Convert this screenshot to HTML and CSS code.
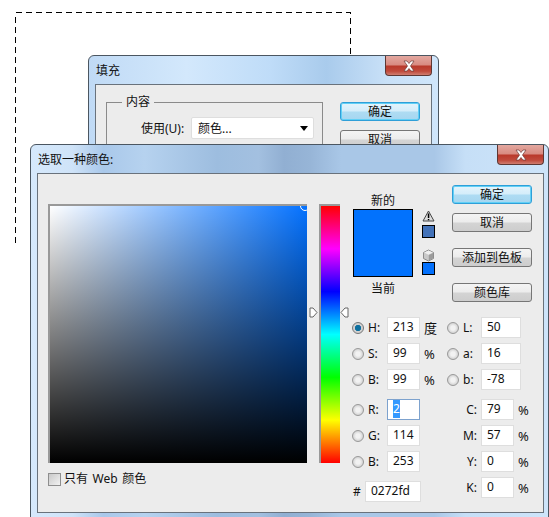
FILE: index.html
```html
<!doctype html>
<html>
<head>
	<title>拾色器</title>
	<link rel="stylesheet" href="styles.css">
</head>
<body>
<div class="desk">
	<svg class="selection" width="337" height="232">
		<rect x="0.5" y="0.5" width="335" height="240" fill="none" stroke="#000" stroke-dasharray="6 4" shape-rendering="crispEdges" />
	</svg>

	<div class="dialog fill-dialog">
		<div class="titlebar">
			<span>填充</span>
			<div class="close">
				<svg width="16" height="12" viewBox="0 0 16 12"><path d="M3 1h3l2 2.500 2-2.500h3l-3.500 5 3.500 5h-3l-2-2.500-2 2.500h-3l3.500-5z" fill="#fff" stroke="#6b3a36" stroke-width="0.7" /></svg>
			</div>
		</div>
		<div class="panel fill-panel">
			<fieldset class="group">
				<legend>内容</legend>
				<div class="use-row">
					<label>使用(U):</label>
					<div class="select"><span>颜色...</span><i class="select-arrow"></i></div>
				</div>
			</fieldset>
			<div class="buttons fill-buttons">
				<button class="default">确定</button>
				<button>取消</button>
			</div>
		</div>
	</div>

	<div class="dialog color-dialog">
		<div class="titlebar">
			<span>选取一种颜色:</span>
			<div class="close">
				<svg width="16" height="12" viewBox="0 0 16 12"><path d="M3 1h3l2 2.500 2-2.500h3l-3.500 5 3.500 5h-3l-2-2.500-2 2.500h-3l3.500-5z" fill="#fff" stroke="#6b3a36" stroke-width="0.7" /></svg>
			</div>
		</div>
		<div class="panel color-panel">
			<div class="picker">
				<div class="field"><i class="field-ring"></i></div>
				<div class="web-only"><i class="checkbox"></i><span>只有 Web 颜色</span></div>
			</div>

			<div class="hue">
				<svg class="hue-mark hue-mark-left" width="9" height="11" viewBox="0 0 9 11"><path d="M1 1h3l4 4.500-4 4.500h-3z" fill="#fff" stroke="#666" /></svg>
				<svg class="hue-mark hue-mark-right" width="9" height="11" viewBox="0 0 9 11"><path d="M8 1h-3l-4 4.500 4 4.500h3z" fill="#fff" stroke="#666" /></svg>
			</div>

			<div class="side">
				<div class="side-top">
					<div class="swatch-col">
						<div class="swatch-label">新的</div>
						<div class="swatch"></div>
						<div class="swatch-label">当前</div>
					</div>
					<div class="gamut-col">
						<svg width="13" height="12" viewBox="0 0 13 12"><path d="M6.500 1l5.500 10h-11z" fill="#dcdcdc" stroke="#444" /><path d="M5.800 3.500h1.500v4.500h-1.500zM5.800 9h1.500v1.300h-1.500z" fill="#000" /></svg>
						<div class="mini-swatch mini-warn"></div>
						<svg class="cube" width="13" height="13" viewBox="0 0 13 13"><path d="M6.500 1l5 2.500v6l-5 2.500-5-2.500v-6z" fill="#c9c9c9" stroke="#8c8c8c" /><path d="M2 3.500l4.500 2.200 4.500-2.200-4.500-2z" fill="#efefef" /><path d="M6.800 6v5.500l4.300-2.200v-5.400z" fill="#9c9c9c" /></svg>
						<div class="mini-swatch mini-web"></div>
					</div>
					<div class="buttons color-buttons">
						<button class="default">确定</button>
						<button>取消</button>
						<button class="spaced">添加到色板</button>
						<button class="spaced">颜色库</button>
					</div>
				</div>

				<div class="values">
					<div class="value-col value-col-left">
						<div class="row"><i class="radio on"></i><label>H:</label><div class="num">213</div><span class="unit">度</span></div>
						<div class="row"><i class="radio"></i><label>S:</label><div class="num">99</div><span class="unit">%</span></div>
						<div class="row"><i class="radio"></i><label>B:</label><div class="num">99</div><span class="unit">%</span></div>
						<div class="row row-gap"><i class="radio"></i><label>R:</label><div class="num focus"><span class="picked">2</span></div></div>
						<div class="row"><i class="radio"></i><label>G:</label><div class="num">114</div></div>
						<div class="row"><i class="radio"></i><label>B:</label><div class="num">253</div></div>
						<div class="row row-gap"><label class="hash">#</label><div class="num hex">0272fd</div></div>
					</div>
					<div class="value-col">
						<div class="row"><i class="radio"></i><label class="lab">L:</label><div class="num wide">50</div></div>
						<div class="row"><i class="radio"></i><label class="lab">a:</label><div class="num wide">16</div></div>
						<div class="row"><i class="radio"></i><label class="lab">b:</label><div class="num wide">-78</div></div>
						<div class="row row-gap"><label class="cmyk">C:</label><div class="num">79</div><span class="unit">%</span></div>
						<div class="row"><label class="cmyk">M:</label><div class="num">57</div><span class="unit">%</span></div>
						<div class="row"><label class="cmyk">Y:</label><div class="num">0</div><span class="unit">%</span></div>
						<div class="row"><label class="cmyk">K:</label><div class="num">0</div><span class="unit">%</span></div>
					</div>
				</div>
			</div>
		</div>
	</div>
</div>
</body>
</html>
```

FILE: styles.css
```css
* {
    margin: 0;
    padding: 0;
    box-sizing: border-box;
}

body {
    background: #fff;
    font: 12px "Noto Sans", "Noto Sans CJK SC", sans-serif;
    color: #111;
}

.desk {
    position: relative;
    width: 549px;
    height: 517px;
    overflow: hidden;
}

.selection {
    position: absolute;
    left: 15px;
    top: 12px;
}

/* windows */
.dialog {
    position: absolute;
    border: 1px solid #4b5661;
    border-radius: 6px 6px 0 0;
    padding: 0 6px;
}

.fill-dialog {
    left: 88px;
    top: 55px;
    width: 351px;
    height: 120px;
    background: linear-gradient(90deg, #c0daf5 0, #d3e8fc 28%, #bfdcf8 52%, #a9cbec 68%, #c8e0f7 85%, #d0e6fb 100%);
}

.color-dialog {
    left: 30px;
    top: 144px;
    width: 519px;
    height: 380px;
    padding-right: 4px;
    background: linear-gradient(90deg, #d6e9fc 0, #cfe3f8 8%, #a9c8ea 14%, #b6d2ef 22%, #9dbddf 36%, #a3c0e0 44%, #91afd2 49%, #97b5d7 54%, #a9c7e7 60%, #a9c7e7 78%, #c6dff7 84%, #cde4fa 100%);
}

.titlebar {
    display: flex;
    justify-content: space-between;
    height: 28px;
    padding: 7px 0 0 1px;
    line-height: 15px;
}

.close {
    display: flex;
    align-items: center;
    justify-content: center;
    width: 47px;
    height: 20px;
    margin-top: -7px;
    border: 1px solid #5e3733;
    border-top: 0;
    border-radius: 0 0 4px 4px;
    background: linear-gradient(#e3a8a0, #d88a80 48%, #b9382a 52%, #c04a3c 80%, #cf7d70);
}

.panel {
    display: flex;
    background: #ececec;
    border: 1px solid #69727c;
}

.fill-panel {
    height: 100px;
}

.color-panel {
    height: 340px;
}

/* buttons */
.buttons {
    display: flex;
    flex-direction: column;
}

.buttons button {
    width: 80px;
    height: 19px;
    padding-top: 1px;
    border: 1px solid #767676;
    border-radius: 3px;
    background: linear-gradient(#f4f4f4, #ececec 48%, #d4d4d4 52%, #cdcdcd);
    font: 12px/16px "Noto Sans", "Noto Sans CJK SC", sans-serif;
    color: #111;
}

.buttons button.default {
    border: 1px solid #2f9fd8;
    box-shadow: inset 0 0 0 1px #61d0f6;
    background: linear-gradient(#e4f4fc, #d4edfa 48%, #aedcf3 52%, #a6d6f0);
}

.fill-buttons {
    gap: 9px;
    margin: 17px 0 0 17px;
}

.color-buttons {
    gap: 9px;
    margin-top: 11px;
}

.color-buttons button.spaced {
    margin-top: 7px;
}

/* fill dialog contents */
.group {
    width: 217px;
    height: 90px;
    margin: 10px 0 0 10px;
    border: 1px solid #8a8a8a;
}

.group legend {
    margin-left: 15px;
    padding: 0 4px;
    font-size: 12px;
    line-height: 14px;
}

.use-row {
    display: flex;
    align-items: center;
    margin: 8px 0 0 34px;
}

.use-row label {
    width: 50px;
}

.select {
    display: flex;
    align-items: center;
    justify-content: space-between;
    width: 123px;
    height: 22px;
    padding: 0 5px 0 6px;
    background: #fff;
    border: 1px solid #dedede;
    border-radius: 2px;
}

.select-arrow {
    border: 4px solid transparent;
    border-top: 5px solid #000;
    border-bottom: 0;
}

/* colour picker */
.picker {
    margin: 30px 0 0 10px;
}

.field {
    position: relative;
    width: 259px;
    height: 259px;
    overflow: hidden;
    border-top: 2px solid #999;
    border-left: 2px solid #999;
    background:
        linear-gradient(transparent, #000),
        linear-gradient(90deg, #fff, #0472ff);
}

.field-ring {
    position: absolute;
    right: -3px;
    top: -5px;
    width: 10px;
    height: 10px;
    border: 1px solid #fff;
    border-radius: 50%;
}

.web-only {
    display: flex;
    align-items: center;
    gap: 3px;
    margin-top: 8px;
    line-height: 16px;
    word-spacing: 1.5px;
}

.checkbox {
    width: 13px;
    height: 13px;
    border: 1px solid #8e8e8e;
    background: linear-gradient(135deg, #c9c9c9, #f2f2f2);
}

.hue {
    position: relative;
    width: 21px;
    height: 259px;
    margin: 30px 0 0 12px;
    border-top: 2px solid #999;
    border-left: 2px solid #999;
    background: linear-gradient(#f00, #f0f 16.7%, #00f 33.3%, #0ff 50%, #0f0 66.7%, #ff0 83.3%, #f00);
}

.hue-mark {
    position: absolute;
    top: 101px;
}

.hue-mark-left {
    left: -12px;
}

.hue-mark-right {
    right: -9px;
}

.side {
    margin-left: 13px;
}

.side-top {
    display: flex;
    height: 143px;
}

.swatch-col {
    width: 60px;
    margin-top: 19px;
    text-align: center;
}

.swatch-label {
    height: 16px;
    line-height: 15px;
}

.swatch {
    height: 68px;
    border: 1px solid #000;
    background: #0272fd;
}

.swatch-col .swatch + .swatch-label {
    margin-top: 4px;
}

.gamut-col {
    display: flex;
    flex-direction: column;
    width: 13px;
    margin: 36px 17px 0 9px;
}

.mini-swatch {
    width: 13px;
    height: 13px;
    border: 1px solid #000;
}

.mini-warn {
    margin-top: 3px;
    background: #4372b8;
}

.mini-web {
    background: #0270fc;
}

.cube {
    margin-top: 11px;
}

.values {
    display: flex;
}

.value-col {
    display: flex;
    flex-direction: column;
    gap: 5px;
}

.value-col-left {
    width: 95px;
    margin-left: -1px;
}

.row {
    display: flex;
    align-items: center;
    height: 21px;
}

.row-gap {
    margin-top: 4px;
}

.radio {
    width: 12px;
    height: 12px;
    margin-right: 4px;
    border: 1px solid #999;
    border-radius: 50%;
    background: radial-gradient(#f2f2f2 30%, #bdbdbd);
}

.radio.on {
    border-color: #777;
    background: radial-gradient(#0c6f9f 40%, #d0d0d0 48%);
}

.row label {
    width: 19px;
    line-height: 16px;
}

.row label.lab {
    width: 18px;
}

.row label.hash {
    width: 12px;
    margin-left: 1px;
}

.row label.cmyk {
    width: 34px;
    padding-right: 4px;
    text-align: right;
}

.num {
    width: 33px;
    height: 21px;
    padding-left: 5px;
    background: #fff;
    border: 1px solid #dedede;
    line-height: 18px;
}

.num.wide {
    width: 40px;
}

.num.hex {
    width: 56px;
}

.num.focus {
    border-color: #7da2ce;
}

.picked {
    display: inline-block;
    background: #3399ff;
    color: #fff;
}

.unit {
    margin-left: 4px;
    font-size: 13px;
}
```
